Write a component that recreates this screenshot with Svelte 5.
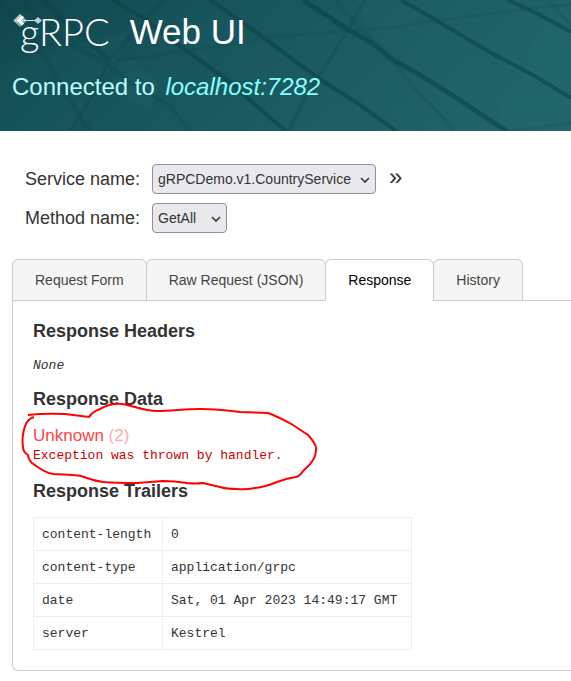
<script>
  const services = ['gRPCDemo.v1.CountryService'];
  const methods = ['GetAll'];
  const tabs = ['Request Form', 'Raw Request (JSON)', 'Response', 'History'];
  const trailers = [
    ['content-length', '0'],
    ['content-type', 'application/grpc'],
    ['date', 'Sat, 01 Apr 2023 14:49:17 GMT'],
    ['server', 'Kestrel']
  ];
  let service = $state(services[0]);
  let method = $state(methods[0]);
  let active = $state('Response');
</script>

<header>
  <svg class="backdrop" viewBox="0 0 571 131" preserveAspectRatio="xMinYMin slice" aria-hidden="true">
    <defs>
      <linearGradient id="teal" x1="0" y1="0" x2="1" y2="0.25">
        <stop offset="0" stop-color="#10474d" />
        <stop offset="0.4" stop-color="#18555c" />
        <stop offset="1" stop-color="#206368" />
      </linearGradient>
    </defs>
    <rect width="571" height="131" fill="url(#teal)" />
    <path d="M355 0 362 18 440 100 460 131 571 131 571 0Z M0 65 130 30 115 62 70 131 0 131Z" fill="#2b7177" opacity=".1" />
    <path d="M540 30 529 50 525 72 505 92 495 131 571 131 571 30Z M120 62 135 60 160 85 150 110 110 90Z" fill="#347d80" opacity=".1" />
    <g fill="none" stroke="#0b4148" opacity=".55">
      <path d="M0 5 35 44 48 63 83 122 90 131" stroke-width="5" opacity=".4" />
      <path d="M22 0 48 28 68 43 105 62 133 84 170 106 190 131" stroke-width="4" opacity=".4" />
      <path d="M43 0 65 22 82 34 109 60" stroke-width="5" opacity=".8" />
      <path d="M113 0 142 17 170 39 205 64 233 84 255 105 286 131" stroke-width="4" />
      <path d="M210 0 239 20 264 38 303 67 327 84 356 102 396 131" stroke-width="4" />
      <path d="M303 0 344 27 372 43 390 58 415 72 455 97 485 117 507 131" stroke-width="5" />
      <path d="M401 0 434 19 464 37 495 55 533 75 571 98" stroke-width="4" />
      <path d="M508 0 540 15 571 32" stroke-width="4" />
      <path d="M163 0 132 35 108 61 98 86 70 131M365 0 348 29 327 64 304 99 289 131" stroke-width="4" opacity=".4" />
      <path d="M335 0 352 20 389 56 413 87 440 114 454 131M549 0 571 26" stroke-width="4" opacity=".25" />
      <path d="M115 61 200 49 275 37 333 32 388 28 450 19 520 10 571 4M510 131 571 123" stroke-width="3" opacity=".25" />
    </g>
  </svg>
  <div class="brand">
    <div class="logo">
      <span>gRPC</span>
      <svg viewBox="0 0 30 16" aria-hidden="true">
        <path d="M7 1 14 7.5 7 14 0 7.5Z" fill="#8ca8ab" />
        <path d="M7 1 10 4 4 10 1 7.5Z" fill="#b8cacb" />
        <path d="m10 3.5-4 4 4 4" fill="none" stroke="#fff" stroke-width="3" />
        <path d="M9 7.5h16" stroke="#d5e1e2" stroke-width="1" />
        <path d="M25 4 29 7.5 25 11 21 7.5Z" fill="#bfd0d1" />
      </svg>
    </div>
    <h1>Web UI</h1>
  </div>
  <p class="target">Connected to <em>localhost:7282</em></p>
</header>

<main>
  <form>
    <div class="field">
      <label for="service">Service name:</label>
      <span class="picker">
        <select id="service" class="wide" bind:value={service}>
          {#each services as item}<option>{item}</option>{/each}
        </select>
        <svg viewBox="0 0 10 6" aria-hidden="true"><path d="m1 1 4 4 4-4" /></svg>
      </span>
      <button type="button" class="more" aria-label="Show service description">»</button>
    </div>
    <div class="field">
      <label for="method">Method name:</label>
      <span class="picker">
        <select id="method" class="narrow" bind:value={method}>
          {#each methods as item}<option>{item}</option>{/each}
        </select>
        <svg viewBox="0 0 10 6" aria-hidden="true"><path d="m1 1 4 4 4-4" /></svg>
      </span>
    </div>
  </form>

  <div class="tabs" role="tablist">
    {#each tabs as tab}
      <button type="button" role="tab" aria-selected={active === tab} class:active={active === tab} onclick={() => (active = tab)}>{tab}</button>
    {/each}
  </div>

  <section class="panel">
    <h2>Response Headers</h2>
    <p class="none">None</p>
    <h2>Response Data</h2>
    <div class="error">
      <p class="status">Unknown <span>(2)</span></p>
      <p class="message">Exception was thrown by handler.</p>
      <svg class="scribble" viewBox="0 0 300 90" aria-hidden="true">
        <path d="M5 13Q22 11 42 12L66 15Q69 10 77 7Q88 1 99 2C112 4 120 9 134 9C150 9 160 7 177 7Q195 7 217 10L245 11Q256 15 270 23L285 33Q293 42 293 46Q293 54 290 58Q287 63 280 69Q277 74 273 75Q265 76 254 80Q242 85 232 86Q222 88 214 87Q204 87 197 85L180 81Q172 82 164 81Q151 79 140 79Q127 80 114 81Q93 81 80 80Q72 79 64 76Q57 73 50 73L30 72Q22 71 9 61Q5 57 5 53Q0 50 0 45Q-1 38 0 33Q1 25 4 20Q7 16 11 15" />
      </svg>
    </div>
    <h2>Response Trailers</h2>
    <table>
      <tbody>
        {#each trailers as [name, value]}
          <tr><th scope="row">{name}</th><td>{value}</td></tr>
        {/each}
      </tbody>
    </table>
  </section>
</main>

<style>
  :global(body) {
    margin: 0;
    background: #fff;
    color: #333;
    font-family: "Liberation Sans", Arial, sans-serif;
    overflow-x: hidden;
  }
  header {
    position: relative;
    box-sizing: border-box;
    padding: 12px 12px 29px;
    background: #18555c;
    overflow: hidden;
  }
  .backdrop {
    position: absolute;
    inset: 0;
    width: 100%;
    height: 100%;
  }
  .brand {
    position: relative;
    display: flex;
    gap: 20px;
    height: 48px;
  }
  .logo {
    position: relative;
    padding-left: 8px;
    color: #fff;
    font: 300 38px/38px Lato, sans-serif;
  }
  .logo svg {
    position: absolute;
    left: 1px;
    top: 1px;
    width: 30px;
    height: 16px;
  }
  h1 {
    margin: 0;
    color: #fff;
    font-size: 35px;
    font-weight: 400;
    line-height: 40px;
  }
  .target {
    position: relative;
    margin: 0;
    padding-top: 12px;
    color: #bff;
    font-size: 24px;
    line-height: 30px;
  }
  em {
    margin-left: 4px;
    color: #8ff;
  }
  main {
    padding: 33px 0 0 12px;
  }
  form {
    display: flex;
    flex-direction: column;
    gap: 9px;
    padding-left: 13px;
  }
  .field {
    display: flex;
    align-items: center;
    height: 30px;
  }
  label {
    width: 127px;
    font-size: 18px;
    white-space: nowrap;
  }
  .picker {
    position: relative;
    display: flex;
  }
  .picker svg {
    position: absolute;
    right: 6px;
    top: 13px;
    width: 10px;
    height: 6px;
    fill: none;
    stroke: #333;
    stroke-width: 1.6;
    pointer-events: none;
  }
  select {
    appearance: none;
    height: 30px;
    padding: 0 5px;
    border: 1px solid #8f8f9d;
    border-radius: 4px;
    background: #e9e9ed;
    color: #333;
    font: 14px "Liberation Sans", Arial, sans-serif;
  }
  .wide {
    width: 224px;
  }
  .narrow {
    width: 75px;
  }
  .more {
    margin-left: 13px;
    padding: 0 0 4px;
    border: 0;
    background: none;
    color: #333;
    font: 24px/24px "Liberation Sans", Arial, sans-serif;
  }
  .tabs {
    position: relative;
    display: flex;
    margin-top: 26px;
  }
  .tabs button {
    height: 42px;
    padding: 0 22px;
    border: 1px solid #ccc;
    border-radius: 6px 6px 0 0;
    background: #f5f5f5;
    color: #444;
    font: 14px "Liberation Sans", Arial, sans-serif;
    white-space: nowrap;
  }
  .tabs button + button {
    margin-left: -1px;
  }
  .tabs .active {
    border-bottom-color: #fff;
    background: #fff;
    color: #000;
  }
  .panel {
    margin-top: -1px;
    padding: 20px;
    border: 1px solid #ccc;
    border-right: 0;
    border-radius: 0 0 0 6px;
  }
  h2 {
    margin: 0;
    font-size: 18px;
    line-height: 20px;
  }
  .none {
    margin: 15px 0 13px;
    font: italic 13px/20px "Liberation Mono", "Courier New", monospace;
  }
  .error {
    position: relative;
    padding: 17px 0 16px;
  }
  .error p {
    margin: 0;
  }
  .status {
    color: #f44;
    font-size: 17px;
    line-height: 20px;
  }
  .status span {
    color: #faa;
  }
  .message {
    color: #c00;
    font: 13px/19px "Liberation Mono", "Courier New", monospace;
  }
  .scribble {
    position: absolute;
    left: -10px;
    top: -7px;
    width: 300px;
    height: 90px;
    overflow: visible;
    fill: none;
    stroke: #f00;
    stroke-width: 2;
    pointer-events: none;
  }
  table {
    margin-top: 16px;
    border-collapse: collapse;
    font: 13px/16px "Liberation Mono", "Courier New", monospace;
  }
  th, td {
    padding: 9px 8px 7px;
    border: 1px solid #eee;
    font-weight: 400;
    text-align: left;
  }
  th {
    min-width: 112px;
  }
  td {
    min-width: 232px;
  }
</style>
